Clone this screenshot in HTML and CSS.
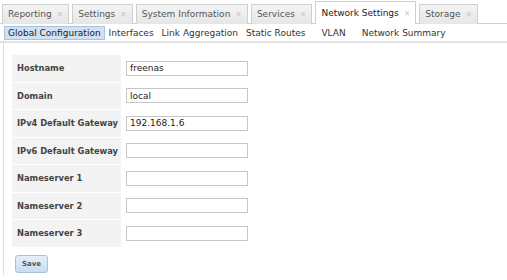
FILE: index.html
```html
<!DOCTYPE html>
<html lang="en">
<head>
    <meta charset="UTF-8">
    <title>Network Settings</title>
    <link rel="stylesheet" href="styles.css">
</head>
<body>
    <div class="tabbar">
        <div class="tab">Reporting <span class="close">&#215;</span></div>
        <div class="tab">Settings <span class="close">&#215;</span></div>
        <div class="tab">System Information <span class="close">&#215;</span></div>
        <div class="tab">Services <span class="close">&#215;</span></div>
        <div class="tab active">Network Settings <span class="close">&#215;</span></div>
        <div class="tab">Storage <span class="close">&#215;</span></div>
    </div>
    <div class="subtabs">
        <span class="subtab selected">Global Configuration</span>
        <span class="subtab">Interfaces</span>
        <span class="subtab">Link Aggregation</span>
        <span class="subtab">Static Routes</span>
        <span class="subtab vlan">VLAN</span>
        <span class="subtab">Network Summary</span>
    </div>
    <div class="panel">
        <table class="form">
            <tr><th>Hostname</th><td><input type="text" value="freenas"></td></tr>
            <tr><th>Domain</th><td><input type="text" value="local"></td></tr>
            <tr><th>IPv4 Default Gateway</th><td><input type="text" value="192.168.1.6"></td></tr>
            <tr><th>IPv6 Default Gateway</th><td><input type="text"></td></tr>
            <tr><th>Nameserver 1</th><td><input type="text"></td></tr>
            <tr><th>Nameserver 2</th><td><input type="text"></td></tr>
            <tr><th>Nameserver 3</th><td><input type="text"></td></tr>
        </table>
        <button class="save">Save</button>
    </div>
</body>
</html>
```

FILE: styles.css
```css
body {
    margin: 0;
    font-family: "DejaVu Sans", Verdana, sans-serif;
    font-size: 9px;
    color: #333;
    background: white;
}
.tabbar {
    display: flex;
    align-items: flex-end;
    height: 23px;
    padding-left: 2px;
    border-bottom: 1px solid #cfcfcf;
}
.tab {
    height: 19px;
    line-height: 19px;
    padding: 0 5px 0 5px;
    margin-right: 3px;
    margin-bottom: -1px;
    background: linear-gradient(#f4f4f4, #e6e6e6);
    border: 1px solid #cfcfcf;
    border-bottom: none;
    color: #555;
    white-space: nowrap;
}
.tab.active {
    height: 22px;
    line-height: 22px;
    background: white;
    border-color: #c5d3df;
    color: #222;
}
.close {
    color: #c4c4c4;
    font-size: 8px;
    margin-left: 2px;
}
.subtabs {
    display: flex;
    align-items: center;
    height: 17px;
    padding: 0 4px;
    border-bottom: 2px solid #e2e2e2;
}
.subtab {
    padding: 1px 3px;
    margin-right: 0;
    color: #333;
    white-space: nowrap;
    border: 1px solid transparent;
}
.subtab.selected {
    background: #cfe1f3;
    border-color: #a9c4de;
    color: #222;
}
.subtab.vlan {
    margin-left: 8px;
    margin-right: 8px;
}
.panel {
    margin-left: 3px;
    border-left: 1px solid #ddd;
    padding: 11px 0 8px 8px;
    height: 213px;
}
.form {
    border-collapse: separate;
    border-spacing: 0 1px;
}
.form th {
    text-align: left;
    background: #f3f3f3;
    color: #444;
    font-size: 8.3px;
    font-weight: bold;
    width: 104px;
    height: 26.5px;
    padding: 0 0 0 5px;
    white-space: nowrap;
}
.form td {
    padding: 0 0 0 5px;
}
.form input {
    width: 114px;
    height: 13px;
    padding: 0 3px;
    border: 1px solid #c6c6c6;
    font-family: "DejaVu Sans", Verdana, sans-serif;
    font-size: 9px;
    color: #222;
}
.save {
    margin-top: 7px;
    margin-left: 3px;
    background: linear-gradient(#e4effa, #c9dcef);
    border: 1px solid #a9c1d9;
    border-radius: 3px;
    padding: 4px 6px;
    font-family: "DejaVu Sans", Verdana, sans-serif;
    font-size: 7px;
    font-weight: bold;
    color: #555;
}
```
